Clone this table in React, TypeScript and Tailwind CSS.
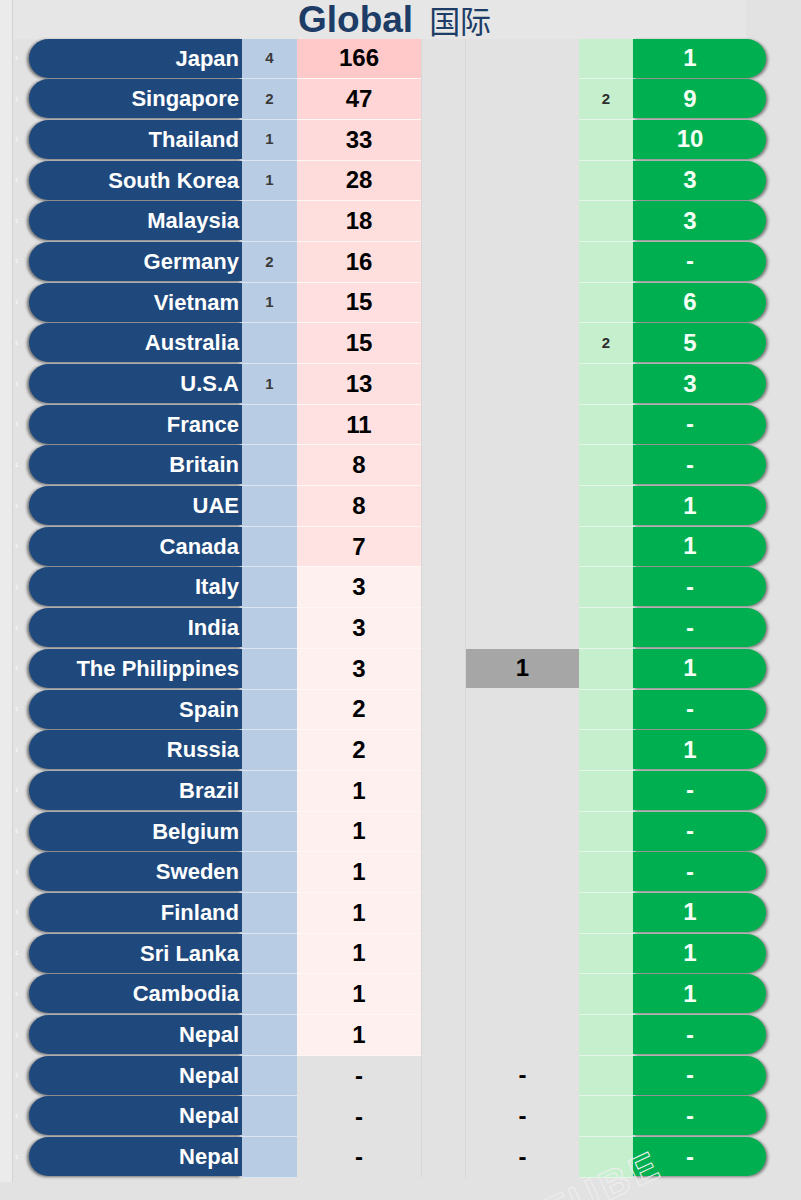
type Row = {
  name: string
  blue?: string
  pink: string
  pinkBg?: string
  mid?: string
  midGray?: boolean
  lg?: string
  green: string
}

const rows: Row[] = [
  { name: 'Japan', blue: '4', pink: '166', pinkBg: 'bg-[#ffc9c9]', green: '1' },
  { name: 'Singapore', blue: '2', pink: '47', pinkBg: 'bg-[#ffd5d5]', lg: '2', green: '9' },
  { name: 'Thailand', blue: '1', pink: '33', pinkBg: 'bg-[#ffdada]', green: '10' },
  { name: 'South Korea', blue: '1', pink: '28', pinkBg: 'bg-[#ffdcdc]', green: '3' },
  { name: 'Malaysia', pink: '18', pinkBg: 'bg-[#ffdede]', green: '3' },
  { name: 'Germany', blue: '2', pink: '16', pinkBg: 'bg-[#ffdede]', green: '-' },
  { name: 'Vietnam', blue: '1', pink: '15', pinkBg: 'bg-[#ffdfdf]', green: '6' },
  { name: 'Australia', pink: '15', pinkBg: 'bg-[#ffdfdf]', lg: '2', green: '5' },
  { name: 'U.S.A', blue: '1', pink: '13', pinkBg: 'bg-[#ffe0e0]', green: '3' },
  { name: 'France', pink: '11', pinkBg: 'bg-[#ffe1e1]', green: '-' },
  { name: 'Britain', pink: '8', pinkBg: 'bg-[#ffe2e2]', green: '-' },
  { name: 'UAE', pink: '8', pinkBg: 'bg-[#ffe2e2]', green: '1' },
  { name: 'Canada', pink: '7', pinkBg: 'bg-[#ffe2e2]', green: '1' },
  { name: 'Italy', pink: '3', pinkBg: 'bg-[#fff0f0]', green: '-' },
  { name: 'India', pink: '3', pinkBg: 'bg-[#fff0f0]', green: '-' },
  { name: 'The Philippines', pink: '3', pinkBg: 'bg-[#fff0f0]', mid: '1', midGray: true, green: '1' },
  { name: 'Spain', pink: '2', pinkBg: 'bg-[#fff0f0]', green: '-' },
  { name: 'Russia', pink: '2', pinkBg: 'bg-[#fff0f0]', green: '1' },
  { name: 'Brazil', pink: '1', pinkBg: 'bg-[#fff0f0]', green: '-' },
  { name: 'Belgium', pink: '1', pinkBg: 'bg-[#fff0f0]', green: '-' },
  { name: 'Sweden', pink: '1', pinkBg: 'bg-[#fff0f0]', green: '-' },
  { name: 'Finland', pink: '1', pinkBg: 'bg-[#fff0f0]', green: '1' },
  { name: 'Sri Lanka', pink: '1', pinkBg: 'bg-[#fff0f0]', green: '1' },
  { name: 'Cambodia', pink: '1', pinkBg: 'bg-[#fff0f0]', green: '1' },
  { name: 'Nepal', pink: '1', pinkBg: 'bg-[#fff0f0]', green: '-' },
  { name: 'Nepal', pink: '-', mid: '-', green: '-' },
  { name: 'Nepal', pink: '-', mid: '-', green: '-' },
  { name: 'Nepal', pink: '-', mid: '-', green: '-' },
]

function TableRow({ row }: { row: Row }) {
  return (
    <div className="flex h-[40.7px] items-start">
      <div className="flex h-[39px] w-[16px] items-center pl-[2px] text-[10px] leading-none text-white/90">‹</div>

      <div className="flex h-[39px] w-[213px] items-center justify-end rounded-l-[20px] bg-[#1f497d] pr-[3px] text-[22px] font-bold text-white shadow-[-2px_1px_3px_rgba(0,0,0,0.5)]">
        {row.name}
      </div>

      <div className="flex h-full w-[55px] items-center justify-center border-b-[1.7px] border-[#dce6f2] bg-[#b8cce4] text-[15px] font-bold text-[#3a3a3a]">
        {row.blue}
      </div>

      <div
        className={`flex h-full w-[124px] items-center justify-center text-[24px] font-bold text-black ${
          row.pinkBg ? `${row.pinkBg} border-b-[1.7px] border-[#fff6f6]` : ''
        }`}
      >
        {row.pink}
      </div>

      <div className="h-full w-[45px] border-x border-[#d8d8d8]" />

      <div
        className={`flex h-[39px] w-[113px] items-center justify-center text-[24px] font-bold text-black ${
          row.midGray ? 'bg-[#a6a6a6]' : ''
        }`}
      >
        {row.mid}
      </div>

      <div className="flex h-full w-[54px] items-center justify-center border-b-[1.7px] border-[#e4f6e7] bg-[#c6efce] text-[15px] font-bold text-[#2f2f2f]">
        {row.lg}
      </div>

      <div className="flex h-[39px] w-[133px] items-center justify-center rounded-r-[20px] bg-[#00b050] pr-[19px] text-[24px] font-bold text-[#f4fff6] shadow-[2px_1px_3px_rgba(0,0,0,0.45)]">
        {row.green}
      </div>
    </div>
  )
}

export default function App() {
  return (
    <div className="relative flex h-[1200px] w-[801px] overflow-hidden bg-[#e2e2e2] font-['Liberation_Sans',Arial,sans-serif]">
      <div className="h-[1182px] w-[13px] border-r border-[#d3d3d3] bg-[#ebebeb]" />

      <div className="flex flex-col">
        <div className="flex h-[38.5px] w-[733px] items-center gap-[16px] bg-[#e6e6e6] pl-[285px]">
          <span className="text-[37px] font-bold leading-none text-[#1d3c66]">Global</span>
          <span className="font-['Noto_Sans_CJK_SC',sans-serif] text-[31px] font-normal leading-[31px] text-[#1d3c66]">
            国际
          </span>
        </div>

        {rows.map((row, i) => (
          <TableRow key={i} row={row} />
        ))}
      </div>

      <div className="pointer-events-none absolute left-[540px] top-[1168px] -rotate-[25deg] text-[40px] font-bold leading-none tracking-[4px] text-transparent [-webkit-text-stroke:1px_#efefef]">
        TUBE
      </div>
    </div>
  )
}
